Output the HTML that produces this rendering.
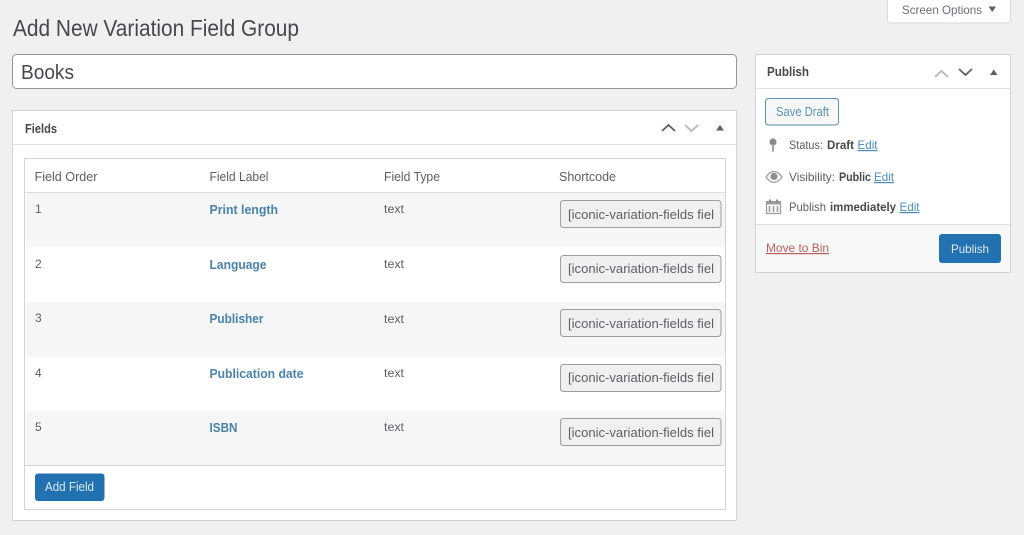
<!DOCTYPE html>
<html><head><meta charset="utf-8"><title>Add New Variation Field Group</title>
<style>
html,body{margin:0;padding:0;background:#f0f0f0;width:1024px;height:535px;overflow:hidden}
svg{display:block;filter:blur(.35px)}
text{font-family:"Liberation Sans",sans-serif;font-size:13px;fill:#5a6066}
text[font-size="12"]{font-size:12px}
.b{font-weight:bold}
.l{fill:#4a82ab;font-weight:bold}
.e{fill:#4a8ab8;text-decoration:underline}
.d{fill:#43494f}
</style></head><body>
<svg width="1024" height="535" viewBox="0 0 1024 535" xmlns="http://www.w3.org/2000/svg">
<rect x="-5" y="-5" width="1034" height="545" fill="#f0f0f0"/>

<!-- Screen options -->
<path d="M887.500 -6V20a3 3 0 0 0 3 3H1007.500a3 3 0 0 0 3-3V-6z" fill="#fff" stroke="#d8dadc"/>
<text x="902" y="14" textLength="80" lengthAdjust="spacingAndGlyphs" font-size="12" style="fill:#6a7076">Screen Options</text>
<path d="M988.500 6.500h7.500l-3.750 5.500z" fill="#5a6066"/>

<!-- Title -->
<text x="13" y="36" textLength="286" lengthAdjust="spacingAndGlyphs" style="font-size:23px" class="d">Add New Variation Field Group</text>
<rect x="12.500" y="54.500" width="724" height="34" rx="4" fill="#fff" stroke="#94979b"/>
<text x="21" y="79" textLength="53" lengthAdjust="spacingAndGlyphs" style="font-size:20px" class="d">Books</text>

<!-- Fields box -->
<rect x="12.500" y="110.500" width="724" height="410" fill="#fff" stroke="#d2d4d7"/>
<line x1="13" y1="144.500" x2="736" y2="144.500" stroke="#dcdee0"/>
<text x="25" y="133" textLength="32" lengthAdjust="spacingAndGlyphs" class="b d">Fields</text>
<path d="M662 131l6.500-6 6.500 6" fill="none" stroke="#5a6066" stroke-width="1.800"/>
<path d="M685 125l6.500 6 6.500-6" fill="none" stroke="#b4b7ba" stroke-width="1.800"/>
<path d="M716 130.500l4-5.500 4 5.500z" fill="#5a6066"/>

<!-- Table -->
<rect x="24.500" y="158.500" width="701" height="351" fill="#fff" stroke="#d0d2d5"/>
<line x1="25" y1="192.500" x2="725" y2="192.500" stroke="#dcdee0"/>
<rect x="26" y="193" width="699" height="54" fill="#f5f6f6"/>
<rect x="26" y="302" width="699" height="55" fill="#f5f6f6"/>
<rect x="26" y="411" width="699" height="54" fill="#f5f6f6"/>
<line x1="25" y1="465.500" x2="725" y2="465.500" stroke="#cfd1d4"/>

<text x="34.500" y="181" textLength="63" lengthAdjust="spacingAndGlyphs">Field Order</text>
<text x="209.500" y="181" textLength="59" lengthAdjust="spacingAndGlyphs">Field Label</text>
<text x="384" y="181" textLength="56" lengthAdjust="spacingAndGlyphs">Field Type</text>
<text x="559" y="181" textLength="57" lengthAdjust="spacingAndGlyphs">Shortcode</text>

<text x="35" y="213" font-size="12">1</text>
<text x="35" y="268" font-size="12">2</text>
<text x="35" y="322" font-size="12">3</text>
<text x="35" y="377" font-size="12">4</text>
<text x="35" y="431" font-size="12">5</text>

<text class="l" x="209.500" y="214" textLength="68.500" lengthAdjust="spacingAndGlyphs">Print length</text>
<text class="l" x="209.500" y="269" textLength="57" lengthAdjust="spacingAndGlyphs">Language</text>
<text class="l" x="209.500" y="323" textLength="54" lengthAdjust="spacingAndGlyphs">Publisher</text>
<text class="l" x="209.500" y="378" textLength="94" lengthAdjust="spacingAndGlyphs">Publication date</text>
<text class="l" x="209.500" y="432" textLength="28" lengthAdjust="spacingAndGlyphs">ISBN</text>

<text x="384" y="213" textLength="20" lengthAdjust="spacingAndGlyphs" font-size="12">text</text>
<text x="384" y="268" textLength="20" lengthAdjust="spacingAndGlyphs" font-size="12">text</text>
<text x="384" y="323" textLength="20" lengthAdjust="spacingAndGlyphs" font-size="12">text</text>
<text x="384" y="377" textLength="20" lengthAdjust="spacingAndGlyphs" font-size="12">text</text>
<text x="384" y="431" textLength="20" lengthAdjust="spacingAndGlyphs" font-size="12">text</text>

<g fill="#f0f0f1" stroke="#9a9da1">
<rect x="560.500" y="200.500" width="160.500" height="27" rx="3"/>
<rect x="560.500" y="255.500" width="160.500" height="27" rx="3"/>
<rect x="560.500" y="309.500" width="160.500" height="27" rx="3"/>
<rect x="560.500" y="364.500" width="160.500" height="27" rx="3"/>
<rect x="560.500" y="418.500" width="160.500" height="27" rx="3"/>
</g>
<text x="568" y="219" textLength="146" lengthAdjust="spacingAndGlyphs">[iconic-variation-fields fiel</text>
<text x="568" y="273" textLength="146" lengthAdjust="spacingAndGlyphs">[iconic-variation-fields fiel</text>
<text x="568" y="328" textLength="146" lengthAdjust="spacingAndGlyphs">[iconic-variation-fields fiel</text>
<text x="568" y="382" textLength="146" lengthAdjust="spacingAndGlyphs">[iconic-variation-fields fiel</text>
<text x="568" y="437" textLength="146" lengthAdjust="spacingAndGlyphs">[iconic-variation-fields fiel</text>

<rect x="35" y="473.500" width="69.500" height="27.500" rx="3" fill="#2271b1"/>
<text x="45" y="491" textLength="49" lengthAdjust="spacingAndGlyphs" style="fill:#dfeaf3">Add Field</text>

<!-- Publish box -->
<rect x="755.500" y="54.500" width="255" height="218" fill="#fff" stroke="#d2d4d7"/>
<line x1="756" y1="88.500" x2="1010" y2="88.500" stroke="#dcdee0"/>
<text x="767" y="76" textLength="42" lengthAdjust="spacingAndGlyphs" class="b d">Publish</text>
<path d="M935 77l6.500-6 6.500 6" fill="none" stroke="#b4b7ba" stroke-width="1.800"/>
<path d="M959 69l6.500 6 6.500-6" fill="none" stroke="#5a6066" stroke-width="1.800"/>
<path d="M990 75l3.750-5.500 3.750 5.500z" fill="#5a6066"/>

<rect x="765.500" y="98.500" width="73" height="26.500" rx="3" fill="#f6f7f7" stroke="#5a90b2"/>
<text x="776" y="116" textLength="53" lengthAdjust="spacingAndGlyphs" style="fill:#5a92b5">Save Draft</text>

<!-- pin -->
<circle cx="773" cy="142" r="3.600" fill="#868b90"/>
<path d="M772 144h2v7.500l-1 .5-1-.5z" fill="#a0a3a7"/>
<text x="789" y="149" textLength="34" lengthAdjust="spacingAndGlyphs" font-size="12">Status:</text>
<text x="827" y="149" textLength="27" lengthAdjust="spacingAndGlyphs" font-size="12" class="b d">Draft</text>
<text x="857.500" y="149" textLength="20" lengthAdjust="spacingAndGlyphs" font-size="12" class="e">Edit</text>

<!-- eye -->
<path d="M766 177c2.500-3.600 5-5.400 8-5.400s5.500 1.800 8 5.400c-2.500 3.600-5 5.400-8 5.400s-5.500-1.800-8-5.400z" fill="none" stroke="#a0a3a7" stroke-width="1.400"/>
<circle cx="774" cy="176.500" r="3.600" fill="#8a8f94"/>
<text x="789" y="181" textLength="46" lengthAdjust="spacingAndGlyphs" font-size="12">Visibility:</text>
<text x="839" y="181" textLength="32" lengthAdjust="spacingAndGlyphs" font-size="12" class="b d">Public</text>
<text x="874" y="181" textLength="20" lengthAdjust="spacingAndGlyphs" font-size="12" class="e">Edit</text>

<!-- calendar -->
<path d="M766.500 202h14v11.500h-14z" fill="none" stroke="#9a9da1" stroke-width="1.300"/>
<rect x="766" y="201" width="15" height="3.500" fill="#9a9da1"/>
<path d="M769 199.500h2v3h-2zM776 199.500h2v3h-2z" fill="#8a8f94"/>
<path d="M769.500 206v6M773.500 206v6M777.500 206v6" stroke="#9a9da1" stroke-width="1.600"/>
<text x="789" y="211" textLength="37" lengthAdjust="spacingAndGlyphs" font-size="12">Publish</text>
<text x="830" y="211" textLength="66" lengthAdjust="spacingAndGlyphs" font-size="12" class="b d">immediately</text>
<text x="899.500" y="211" textLength="20" lengthAdjust="spacingAndGlyphs" font-size="12" class="e">Edit</text>

<rect x="756" y="224" width="254" height="48" fill="#f6f7f7"/>
<line x1="756" y1="224.500" x2="1010" y2="224.500" stroke="#dfe0e2"/>
<text x="766" y="252" textLength="63" lengthAdjust="spacingAndGlyphs" font-size="12" style="fill:#bd5f5e;text-decoration:underline">Move to Bin</text>
<rect x="939" y="234" width="62" height="29" rx="3" fill="#2271b1"/>
<text x="951" y="253" textLength="38" lengthAdjust="spacingAndGlyphs" font-size="12" style="fill:#dfeaf3">Publish</text>
</svg>
</body></html>
